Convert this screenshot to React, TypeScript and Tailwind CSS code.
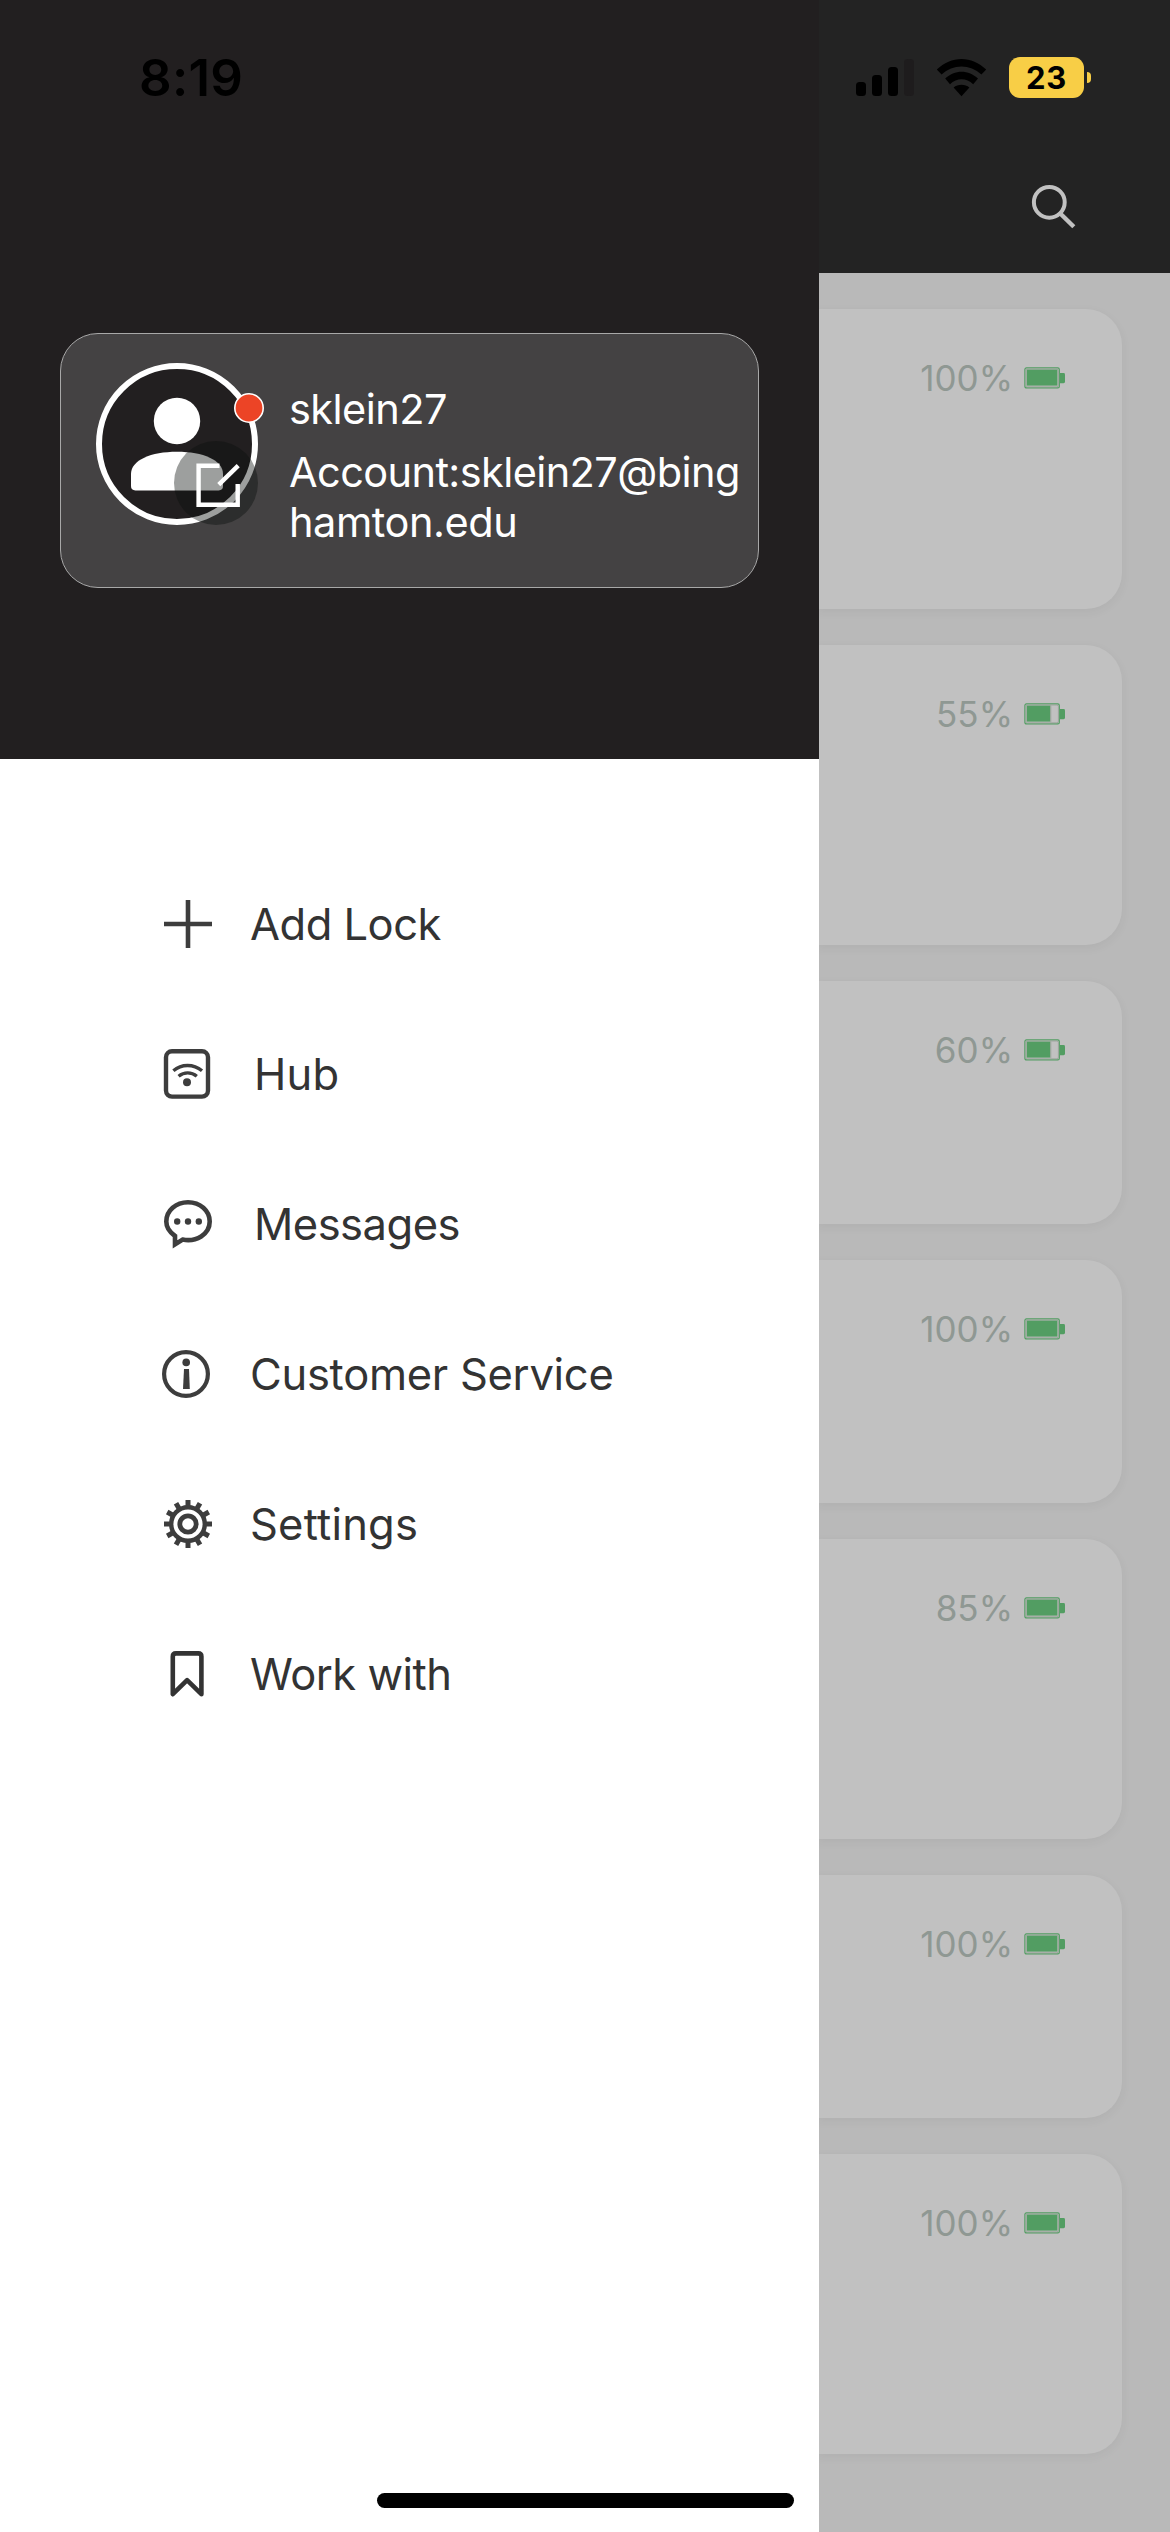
import type { ReactNode } from 'react';

type MenuItem = {
  label: string;
  icon: ReactNode;
  textClass: string;
};

const locks = [
  { level: 100, height: 'h-[300px]' },
  { level: 55, height: 'h-[300px]' },
  { level: 60, height: 'h-[243px]' },
  { level: 100, height: 'h-[243px]' },
  { level: 85, height: 'h-[300px]' },
  { level: 100, height: 'h-[243px]' },
  { level: 100, height: 'h-[300px]' },
];

function PlusIcon() {
  return (
    <svg width="52" height="52" viewBox="0 0 52 52" fill="none" stroke="#3d3d3d" strokeWidth="4.6">
      <path d="M26 2v48M2 26h48" />
    </svg>
  );
}

function HubIcon() {
  return (
    <svg width="52" height="52" viewBox="0 0 52 52" fill="none" stroke="#3d3d3d">
      <rect x="4" y="3.2" width="42" height="45.4" rx="6" strokeWidth="4.4" />
      <path d="M11.4 22.8C19.5 15.8 31.5 15.8 40 22.8" strokeWidth="3.4" />
      <path d="M16.6 28.2C22 23.8 29.4 23.8 34.8 28.2" strokeWidth="3.4" />
      <circle cx="25" cy="34.3" r="4" fill="#3d3d3d" stroke="none" />
    </svg>
  );
}

function MessagesIcon() {
  return (
    <svg width="52" height="52" viewBox="0 0 52 52" fill="none">
      <path
        d="M26 4.3C14 4.3 4.3 12.6 4.3 23.6C4.3 29.6 7.8 34.4 13 38V46.4L20.6 41.6C34 44.2 47.7 36.6 47.7 23.6C47.7 12.6 38 4.3 26 4.3Z"
        stroke="#3d3d3d"
        strokeWidth="4.6"
      />
      <g fill="#3d3d3d">
        <circle cx="15.2" cy="23.5" r="3.2" />
        <circle cx="26" cy="23.5" r="3.2" />
        <circle cx="36.8" cy="23.5" r="3.2" />
      </g>
    </svg>
  );
}

function InfoIcon() {
  return (
    <svg width="52" height="52" viewBox="0 0 52 52" fill="none">
      <circle cx="24" cy="26" r="21.9" stroke="#3d3d3d" strokeWidth="4.2" />
      <circle cx="24.2" cy="14.4" r="3.8" fill="#3d3d3d" />
      <path d="M22 21h5l.8 20H21z" fill="#3d3d3d" />
    </svg>
  );
}

function GearIcon() {
  const teeth = [0, 30, 60, 90, 120, 150, 180, 210, 240, 270, 300, 330];
  return (
    <svg width="52" height="52" viewBox="0 0 52 52" fill="none" stroke="#3d3d3d">
      <circle cx="26" cy="26" r="16.8" strokeWidth="4.4" />
      <circle cx="26" cy="26" r="8.2" strokeWidth="4.8" />
      {teeth.map((angle) => (
        <path key={angle} d="M26 2v7" strokeWidth="5" transform={`rotate(${angle} 26 26)`} />
      ))}
    </svg>
  );
}

function BookmarkIcon() {
  return (
    <svg width="52" height="52" viewBox="0 0 52 52" fill="none" stroke="#333" strokeWidth="4.6" strokeLinejoin="round">
      <path d="M10.8 46.2V8.6Q10.8 5.4 14 5.4H36.2Q39.4 5.4 39.4 8.6V46.2L25.1 32.2Z" />
    </svg>
  );
}

const menu: MenuItem[] = [
  { label: 'Add Lock', icon: <PlusIcon />, textClass: 'ml-[36px] tracking-[-0.5px]' },
  { label: 'Hub', icon: <HubIcon />, textClass: 'ml-[40px] tracking-[0.2px]' },
  { label: 'Messages', icon: <MessagesIcon />, textClass: 'ml-[40px] tracking-[-0.5px]' },
  { label: 'Customer Service', icon: <InfoIcon />, textClass: 'ml-[36px] tracking-[-0.28px]' },
  { label: 'Settings', icon: <GearIcon />, textClass: 'ml-[36px] tracking-[0.2px]' },
  { label: 'Work with', icon: <BookmarkIcon />, textClass: 'ml-[36px] tracking-[-0.5px]' },
];

function Avatar() {
  return (
    <svg className="shrink-0" width="180" height="180" viewBox="90 354 180 180" fill="none">
      <circle cx="177" cy="444" r="78" fill="#221f20" stroke="#fff" strokeWidth="6" />
      <circle cx="177" cy="421" r="23.2" fill="#fff" />
      <path
        d="M131 474C131 460 151 451.7 177 451.7C203 451.7 223 460 223 474V486Q223 490.4 218.6 490.4H135.4Q131 490.4 131 486Z"
        fill="#fff"
      />
      <circle cx="216" cy="483" r="42" fill="#0b0f0d" fillOpacity="0.4" />
      <path d="M219.5 465.8H198.6V504.7H237.7V484" stroke="#fff" strokeWidth="4.4" />
      <path d="M218.8 484.6L238.2 465.6" stroke="#fff" strokeWidth="4.4" />
      <circle cx="249" cy="408" r="14.2" fill="#ec4426" stroke="#fff" strokeWidth="1.6" />
    </svg>
  );
}

function ProfileCard() {
  return (
    <div className="mx-[60px] mt-[333px] flex h-[255px] rounded-[38px] border border-[#a8a8a8] bg-[#444243] pl-[29px] pt-[20px]">
      <Avatar />
      <div className="ml-[19px] mt-[30px] whitespace-nowrap text-[41.5px] leading-[50px] tracking-[-0.55px] text-white">
        <p>sklein27</p>
        <p className="mt-[13px]">
          <span className="tracking-[-0.6px]">Account:sklein27@bing</span>
          <br />
          <span className="tracking-[-0.45px]">hamton.edu</span>
        </p>
      </div>
    </div>
  );
}

function Drawer() {
  return (
    <aside className="relative flex h-full w-[819px] shrink-0 flex-col bg-white">
      <div className="h-[759px] bg-[#221f20]">
        <time className="absolute left-[139px] top-[47px] text-[51px] font-semibold leading-[62px] tracking-[0.3px] text-black">
          8:19
        </time>
        <div className="flow-root">
          <ProfileCard />
        </div>
      </div>
      <nav className="mt-[90px] flex-1">
        {menu.map((item) => (
          <a key={item.label} className="flex h-[150px] items-center pl-[162px] text-[#333]">
            {item.icon}
            <span className={`whitespace-nowrap text-[43.5px] leading-[52px] ${item.textClass}`}>{item.label}</span>
          </a>
        ))}
      </nav>
      <div className="mb-6 ml-[377px] h-[15px] w-[417px] rounded-full bg-black" />
    </aside>
  );
}

function StatusIcons() {
  return (
    <div className="flex h-[41px] items-center">
      <svg width="60" height="41" viewBox="855 57 60 41">
        <rect x="856" y="82" width="10" height="14" rx="3.5" />
        <rect x="872" y="75" width="10" height="21" rx="3.5" />
        <rect x="888" y="67" width="10" height="29" rx="3.5" />
        <rect x="904" y="59" width="10" height="37" rx="3.5" fill="#1e1c1d" />
      </svg>
      <svg className="ml-[21px]" width="51" height="41" viewBox="936 57 51 41">
        <path d="M936.8 69.6C951 55.4 972 55.4 986.2 69.6L981.4 74.6C970 63.8 953 63.8 941.6 74.6Z" />
        <path d="M945.2 78.6C954.4 69.4 968.8 69.4 978 78.6L973.2 84.2C966.4 77.6 956.8 77.6 950 84.2Z" />
        <path d="M953.6 87.4C957.8 83.8 965.2 83.8 969.4 87.4L961.5 96.2Z" />
      </svg>
      <div className="ml-[22px] flex h-[41px] w-[75px] items-center justify-center rounded-[11px] bg-[#f8ce46] text-[31px] font-bold leading-none tracking-[0.8px] text-black">
        23
      </div>
      <div className="ml-[3px] h-[11px] w-1 rounded-r-full bg-[#f8ce46]" />
    </div>
  );
}

function Battery({ level }: { level: number }) {
  const full = level > 80;
  return (
    <svg width="42" height="22" viewBox="0 0 42 22" fill="none">
      <rect x="0.9" y="0.9" width="34.4" height="20" rx="1.5" stroke="#529d62" strokeWidth="1.2" />
      <rect x="2" y="2" width="32.4" height="17.8" rx="1.5" stroke="#9da59d" strokeWidth="1" />
      <rect x="2.8" y="2.6" width={full ? 30.6 : 23.6} height="16" fill="#529d62" />
      {!full && <path d="M26.8 2.5v16.4" stroke="#9da59d" strokeWidth="1" />}
      <path d="M36 6h3.6Q41 6 41 7.4v7.4q0 1.4-1.4 1.4H36z" fill="#529d62" />
    </svg>
  );
}

function LockList() {
  return (
    <section className="flex flex-1 flex-col overflow-hidden bg-[#b9b9b9]">
      <header className="h-[273px] bg-[#232323] pl-[36px] pt-[57px]">
        <StatusIcons />
        <svg className="ml-[175px] mt-[84px]" width="48" height="48" viewBox="1030 182 48 48" fill="none" stroke="#c1c1c1" strokeWidth="4">
          <circle cx="1049.3" cy="202.3" r="15.4" />
          <path d="M1060 213.2L1073.8 226.8" strokeWidth="4.4" />
        </svg>
      </header>
      <div className="mr-12 flex flex-col gap-9 pt-9">
        {locks.map((lock, i) => (
          <div
            key={i}
            className={`${lock.height} flex items-start justify-end rounded-r-[36px] bg-[#c1c1c1] pr-[56px] pt-[51px] shadow-[0_3px_8px_2px_rgba(0,0,0,0.035)]`}
          >
            <div className="flex items-center text-[35px] leading-[36px] text-[#8f9893]">
              {lock.level}%
              <span className="ml-[11px]">
                <Battery level={lock.level} />
              </span>
            </div>
          </div>
        ))}
      </div>
    </section>
  );
}

function App() {
  return (
    <div className="flex h-[2532px] w-[1170px] overflow-hidden font-[Inter,sans-serif]">
      <Drawer />
      <LockList />
    </div>
  );
}

export default App;
